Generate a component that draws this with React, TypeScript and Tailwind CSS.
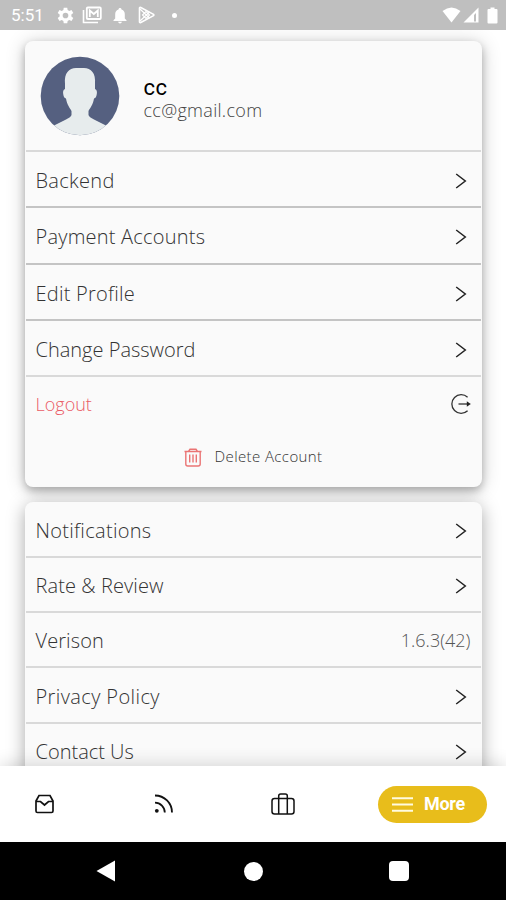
import type { ReactNode } from "react";

type RowProps = {
  label: string;
  height: string;
  tracking?: string;
  border?: string;
  right?: ReactNode;
};

const Chevron = () => (
  <svg width="12" height="16" viewBox="0 0 12 16" fill="none" stroke="#222" strokeWidth="1.5" className="mr-1">
    <path d="M1.2 1L10.3 8L1.2 15" />
  </svg>
);

const LogoutIcon = () => (
  <svg width="22" height="22" viewBox="0 0 22 22" fill="none" stroke="#333" strokeWidth="1.3" className="-mr-px">
    <path d="M17.6 4.3A9.3 9.3 0 1 0 17.6 17.7" />
    <path d="M8.5 11H18" />
    <path d="M16.8 8.2L20.8 11L16.8 13.8Z" fill="#222" stroke="none" />
  </svg>
);

const TrashIcon = () => (
  <svg width="18" height="19" viewBox="0 0 18 19" fill="none" stroke="#ea7474" strokeWidth="1.4">
    <path d="M0.5 3.5H17.5M4.5 3.5L6 1.3H12L13.500 3.5M1.8 3.8V16Q1.8 18 3.8 18H14.2Q16.2 18 16.2 16V3.8" />
    <path d="M5.7 6.500V14.500M9 6.500V14.500M12.3 6.500V14.500" />
  </svg>
);

const Avatar = () => (
  <svg width="80" height="80" viewBox="0 0 80 80">
    <defs>
      <clipPath id="avatar">
        <circle cx="40" cy="40" r="39.3" />
      </clipPath>
    </defs>
    <g clipPath="url(#avatar)">
      <rect width="80" height="80" fill="#556080" />
      <path
        d="M25 28C24 17 29 12 36 12H44C51 12 56 17 55 28L55 33Q57.500 34 56.800 38Q56.300 42 54 42.500C53 49 50 52 48.500 55V59Q49 61 54 63.500L67 70V80H13V70L26 63.500Q31 61 31.500 59V55C30 52 27 49 26 42.500Q23.700 42 23.200 38Q22.500 34 25 33Z"
        fill="#e7eced"
      />
    </g>
  </svg>
);

const Row = ({ label, height, tracking = "", border = "border-[#d9d9d9]", right = <Chevron /> }: RowProps) => (
  <div className={`mx-px flex items-center justify-between border-b-2 px-2.5 pt-[3px] ${height} ${border}`}>
    <span className={`text-[20px] leading-6 whitespace-nowrap ${tracking}`}>{label}</span>
    {right}
  </div>
);

const StatusBar = () => (
  <div className="flex h-[30px] shrink-0 items-center justify-between bg-[#bfbfbf] pr-2 pl-[11px] text-white">
    <div className="flex items-center">
      <span className="w-[46px] font-['Roboto'] text-[17px] leading-5 font-normal">5:51</span>
      <svg width="17" height="17" viewBox="0 0 24 24" fill="currentColor">
        <path
          fillRule="evenodd"
          d="M9.500 1H14.500L15 4.200L17.300 5.500L20.500 4.300L23 8.600L20.300 10.700V13.300L23 15.400L20.500 19.700L17.300 18.500L15 19.800L14.500 23H9.500L9 19.800L6.700 18.500L3.500 19.700L1 15.400L3.700 13.300V10.700L1 8.600L3.500 4.300L6.700 5.500L9 4.200ZM12 8A4 4 0 1 0 12 16A4 4 0 1 0 12 8Z"
        />
      </svg>
      <svg width="20" height="18" viewBox="0 0 20 18" fill="none" stroke="currentColor" className="ml-2">
        <path d="M1.500 4V16.500H16" strokeWidth="1.600" />
        <rect x="4.800" y="1.500" width="14" height="11.500" rx="1" strokeWidth="1.800" />
        <path d="M7.800 11V4.500L11.800 8L15.800 4.500V11" strokeWidth="1.800" />
      </svg>
      <svg width="14" height="17" viewBox="0 0 14 17" fill="currentColor" className="ml-[11px]">
        <path d="M7 1C8 1 8.500 1.600 8.500 2.500C11 3.200 11.800 5.200 11.800 7.500V11.500L13.500 13.200V14H0.500V13.200L2.200 11.500V7.500C2.200 5.200 3 3.200 5.500 2.500C5.500 1.600 6 1 7 1ZM5 14.800H9Q8.500 16.500 7 16.500Q5.500 16.500 5 14.800Z" />
      </svg>
      <svg width="17" height="18" viewBox="0 0 17 18" fill="none" stroke="currentColor" className="ml-[11px]">
        <path d="M1.500 2Q1.500 1 2.800 1.500L15.500 8.300Q16.200 9 15.500 9.700L2.800 16.500Q1.500 17 1.500 16Z" strokeWidth="1.600" />
        <path d="M2 3L11.500 12M2 15L11.500 6M4.500 9L8 5.500L11.500 9L8 12.500Z" strokeWidth="1.200" />
      </svg>
      <span className="ml-[17px] size-[5px] rounded-full bg-white" />
    </div>
    <div className="flex items-center">
      <svg width="19" height="16" viewBox="0 0 19 16" fill="currentColor">
        <path d="M0.500 4Q9.500 -3 18.500 4L9.500 15.500Z" />
      </svg>
      <svg width="16" height="16" viewBox="0 0 16 16" className="ml-0.5">
        <path d="M0.500 15.500L15.500 0.500V15.500Z" fill="white" />
        <path d="M11 8V14.500H13V6Z" fill="#bfbfbf" />
      </svg>
      <svg width="11" height="17" viewBox="0 0 11 17" fill="currentColor" className="ml-2">
        <path d="M3.500 0.500H7.500V2H9.500Q10.500 2 10.500 3V15.500Q10.500 16.500 9.500 16.500H1.500Q0.500 16.500 0.500 15.500V3Q0.500 2 1.500 2H3.500Z" />
      </svg>
    </div>
  </div>
);

const cardClass = "mx-auto w-[457px] shrink-0 rounded-lg bg-[#fafafa]";

const TabBar = () => (
  <div className="relative flex h-[76px] shrink-0 items-center bg-white pr-[19px] pl-[35px] shadow-[0_-2px_16px_rgba(0,0,0,0.15)]">
    <svg width="20" height="20" viewBox="0 0 20 20" fill="none" stroke="#111" strokeWidth="1.700">
      <path d="M1 7L4 1.500H15L18 7V17Q18 18.500 16.500 18.500H2.500Q1 18.500 1 17ZM1 7.500H5.500L9.500 11L13.500 7.500H18" />
    </svg>
    <svg width="20" height="20" viewBox="0 0 20 20" fill="none" stroke="#111" strokeWidth="1.800" className="ml-[99px]">
      <path d="M1 1.500A17 17 0 0 1 18 18.500M1 8.700A9.800 9.800 0 0 1 10.800 18.500" />
      <circle cx="2.800" cy="16.800" r="1.900" fill="#111" stroke="none" />
    </svg>
    <svg width="24" height="22" viewBox="0 0 24 22" fill="none" stroke="#111" strokeWidth="1.500" className="ml-[97px]">
      <rect x="1" y="5.500" width="22" height="15.500" rx="2.500" />
      <path d="M7.700 21V3Q7.700 1 9.700 1H14.300Q16.300 1 16.300 3V21" />
    </svg>
    <button className="ml-auto flex h-[37px] w-[109px] items-center rounded-full bg-[#e8bd1b] pl-3.5 text-white">
      <svg width="21" height="15" viewBox="0 0 21 15" stroke="#fffbe0" strokeWidth="1.900">
        <path d="M0 1.200H21M0 7.500H21M0 13.800H21" />
      </svg>
      <span className="ml-[11px] font-['Roboto'] text-[18px] leading-6 font-bold tracking-[-0.3px]">More</span>
    </button>
  </div>
);

export default function App() {
  return (
    <div className="flex h-[900px] w-[506px] flex-col overflow-hidden bg-white font-['Open_Sans',sans-serif] font-light text-[#333]">
      <StatusBar />
      <div className="flex min-h-0 flex-1 flex-col gap-[15px] overflow-hidden pt-[11px]">
        <div className={`${cardClass} h-[446px] shadow-[0_4px_8px_rgba(0,0,0,0.25),0_2px_20px_rgba(0,0,0,0.2)]`}>
          <div className="mx-px flex h-[111px] items-center border-b-2 border-[#d9d9d9] pt-px pl-3.5">
            <Avatar />
            <div className="ml-[24px] flex flex-col pt-1">
              <span className="font-['Roboto'] text-[22px] leading-[23px] font-normal tracking-[0.5px] text-black">cc</span>
              <span className="text-[18px] leading-[22px] tracking-[0.3px] text-[#444]">cc@gmail.com</span>
            </div>
          </div>
          <Row label="Backend" height="h-14" tracking="tracking-[0.3px]" border="border-[#c4c4c4]" />
          <Row label="Payment Accounts" height="h-[57px]" tracking="tracking-[0.22px]" border="border-[#c4c4c4]" />
          <Row label="Edit Profile" height="h-14" tracking="tracking-[0.25px]" border="border-[#c4c4c4]" />
          <Row label="Change Password" height="h-14" />
          <div className="flex h-[53px] items-center justify-between px-[11px] text-[#ea5c66]">
            <span className="text-[18px] leading-6">Logout</span>
            <LogoutIcon />
          </div>
          <div className="flex h-[54px] items-center justify-center gap-[13px]">
            <TrashIcon />
            <span className="pb-0.5 text-[15px] leading-5 tracking-[0.4px]">Delete Account</span>
          </div>
        </div>
        <div className={`${cardClass} h-[400px] shadow-[0_4px_18px_rgba(0,0,0,0.35)]`}>
          <Row label="Notifications" height="h-14" tracking="tracking-[0.3px]" />
          <Row label="Rate & Review" height="h-[55px]" tracking="tracking-[0.1px]" />
          <Row
            label="Verison"
            height="h-[55px]"
            tracking="tracking-[0.1px]"
            right={<span className="pb-0.5 text-[18px] leading-6 text-[#555]">1.6.3(42)</span>}
          />
          <Row label="Privacy Policy" height="h-14" tracking="tracking-[0.4px]" />
          <Row label="Contact Us" height="h-[55px]" />
        </div>
      </div>
      <TabBar />
      <div className="relative flex h-[58px] shrink-0 items-center justify-between bg-black pr-[97px] pl-24 text-white">
        <svg width="20" height="22" viewBox="0 0 20 22" fill="currentColor">
          <path d="M0.500 11L19 0.500V21.500Z" />
        </svg>
        <span className="ml-0.5 size-[19px] rounded-full bg-white" />
        <span className="size-5 rounded-sm bg-white" />
      </div>
    </div>
  );
}
